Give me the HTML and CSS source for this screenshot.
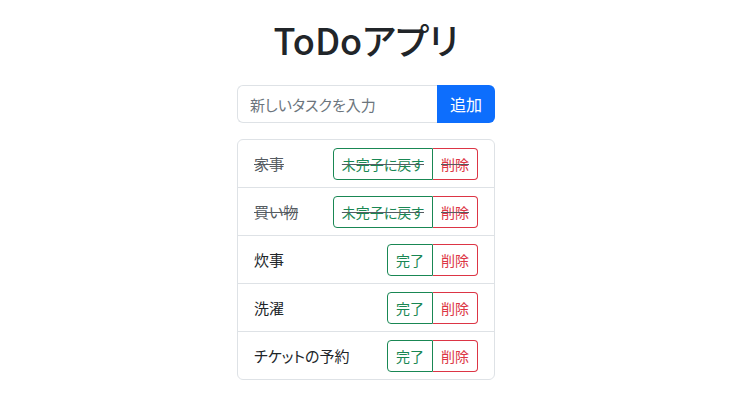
FILE: index.html
```html
<!DOCTYPE html>
<html lang="ja">
<head>
    <meta charset="UTF-8">
    <meta name="viewport" content="width=device-width, initial-scale=1.0">
    <title>ToDoアプリ</title>
    <link rel="stylesheet" href="styles.css">
</head>
<body>
    <div class="container">
        <h1>ToDoアプリ</h1>

        <!-- 入力フォーム -->
        <div class="input-group">
            <input type="text" class="task-input" placeholder="新しいタスクを入力">
            <button class="btn-add">追加</button>
        </div>

        <!-- タスク一覧 -->
        <ul class="list-group">
            <li class="list-item done">
                <span class="task-name">家事</span>
                <div class="btn-group">
                    <button class="btn btn-success">未完子に戻す</button>
                    <button class="btn btn-danger">削除</button>
                </div>
            </li>
            <li class="list-item done">
                <span class="task-name">買い物</span>
                <div class="btn-group">
                    <button class="btn btn-success">未完子に戻す</button>
                    <button class="btn btn-danger">削除</button>
                </div>
            </li>
            <li class="list-item">
                <span class="task-name">炊事</span>
                <div class="btn-group">
                    <button class="btn btn-success">完了</button>
                    <button class="btn btn-danger">削除</button>
                </div>
            </li>
            <li class="list-item">
                <span class="task-name">洗濯</span>
                <div class="btn-group">
                    <button class="btn btn-success">完了</button>
                    <button class="btn btn-danger">削除</button>
                </div>
            </li>
            <li class="list-item">
                <span class="task-name">チケットの予約</span>
                <div class="btn-group">
                    <button class="btn btn-success">完了</button>
                    <button class="btn btn-danger">削除</button>
                </div>
            </li>
        </ul>
    </div>
</body>
</html>
```

FILE: styles.css
```css
:root {
    --text: #212529;
    --muted: #555b61;
    --border: #dee2e6;
    --primary: #0d6efd;
    --success: #198754;
    --danger: #dc3545;
}
body {
    margin: 0;
    padding: 0;
    background: #ffffff;
    color: var(--text);
    font-family: "Noto Sans CJK JP", "Noto Sans", sans-serif;
    font-feature-settings: "palt";
    font-size: 16px;
}
.container {
    width: 258px;
    margin: 0 auto;
}
h1 {
    margin: 16px 0 23px;
    font-size: 36px;
    font-weight: 500;
    line-height: 46px;
    text-align: center;
}
.input-group {
    display: flex;
    height: 38px;
}
.task-input {
    flex: 1;
    min-width: 0;
    padding: 6px 12px;
    border: 1px solid var(--border);
    border-right: none;
    border-radius: 6px 0 0 6px;
    font-family: inherit;
    font-feature-settings: "palt";
    font-size: 15px;
    color: var(--text);
    outline: none;
}
.task-input::placeholder {
    color: #6c757d;
}
.btn-add {
    width: 58px;
    border: none;
    border-radius: 0 6px 6px 0;
    background: var(--primary);
    color: #ffffff;
    font-family: inherit;
    font-size: 16px;
}
.list-group {
    list-style: none;
    margin: 16px 0 0;
    padding: 0;
    border: 1px solid var(--border);
    border-radius: 6px;
}
.list-item {
    display: flex;
    align-items: center;
    justify-content: space-between;
    height: 47px;
    padding: 0 16px;
    border-top: 1px solid var(--border);
    font-size: 15px;
}
.list-item:first-child {
    border-top: none;
}
.done {
    text-decoration: line-through;
    color: var(--muted);
}
.btn-group {
    display: flex;
}
.btn {
    height: 32px;
    padding: 0 8px;
    background: #ffffff;
    font-family: inherit;
    font-feature-settings: "palt";
    font-size: 14px;
    text-decoration: inherit;
}
.btn-success {
    border: 1px solid var(--success);
    border-radius: 4px 0 0 4px;
    color: var(--success);
}
.btn-danger {
    border: 1px solid var(--danger);
    border-left: none;
    border-radius: 0 4px 4px 0;
    color: var(--danger);
}
```
